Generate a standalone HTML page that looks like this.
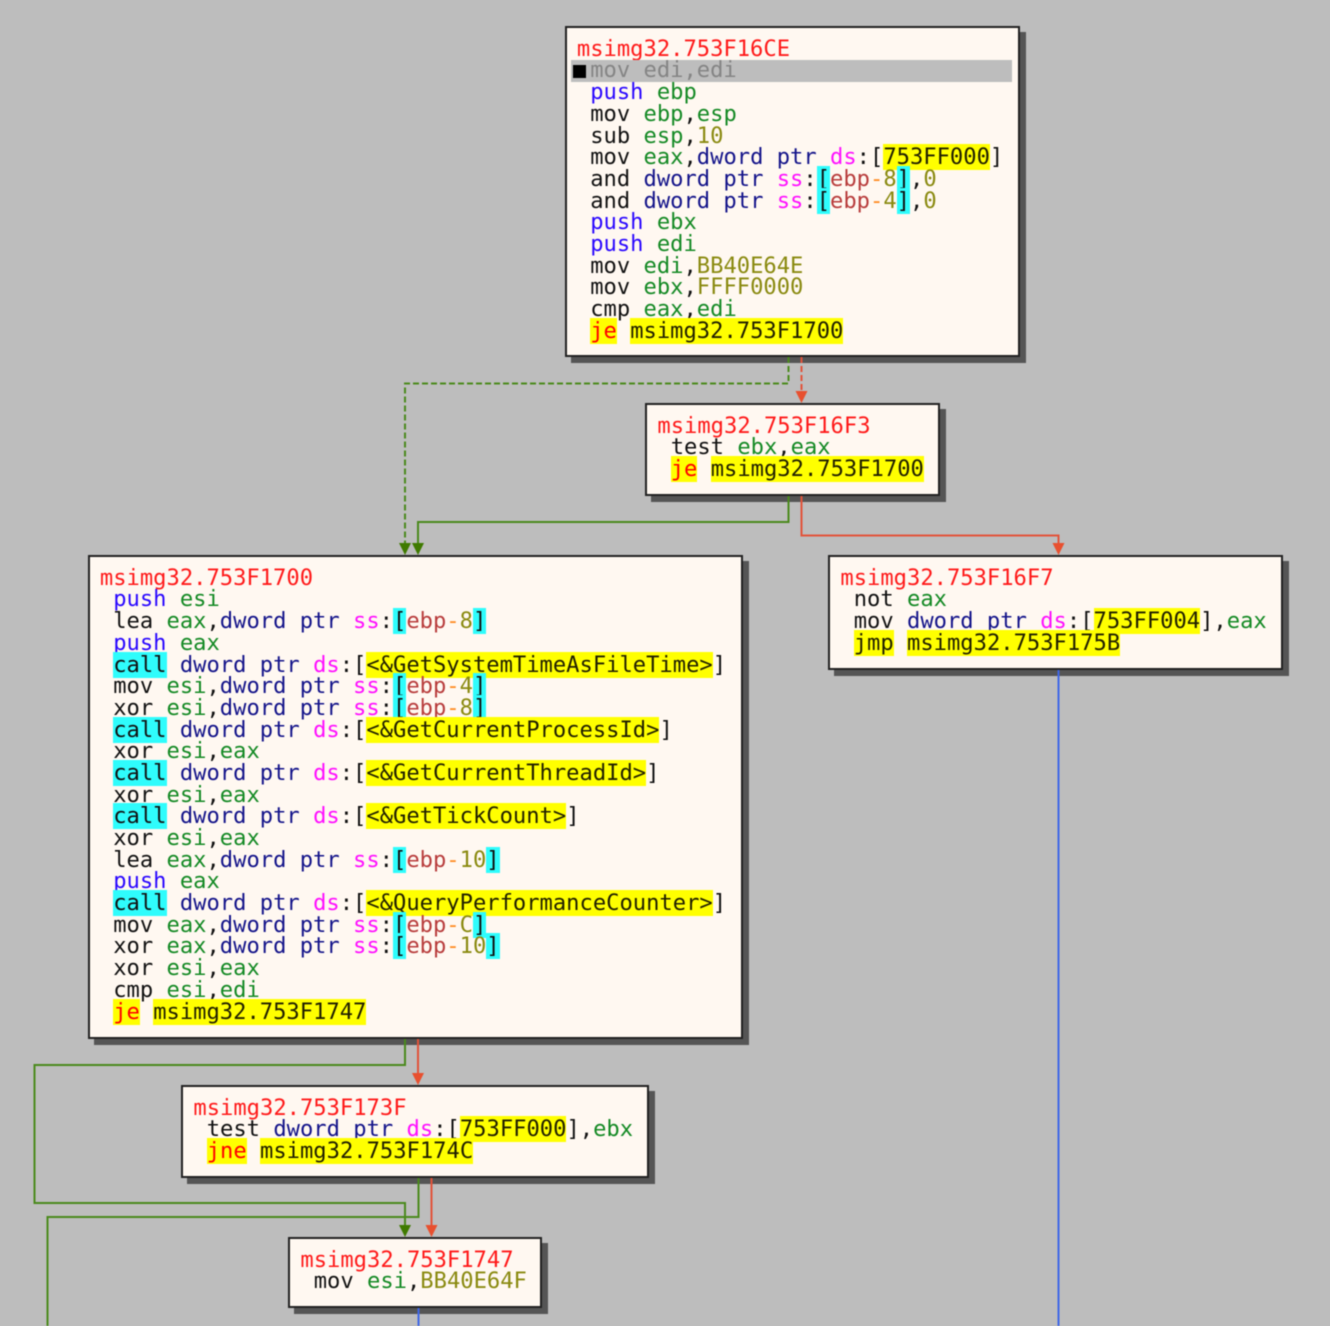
<!DOCTYPE html>
<html><head><meta charset="utf-8"><style>
html,body{margin:0;padding:0;background:#bdbdbd}
#w{position:relative;width:1330px;height:1326px;overflow:hidden;background:#bdbdbd;filter:blur(.45px)}
svg{position:absolute;left:0;top:0}
.d{position:absolute;box-sizing:border-box;background:#fff8f1;border:2px solid #222;box-shadow:6px 6px 0 #555;padding:10.8px 0 0 10.4px;font:22.13px/21.7px "DejaVu Sans Mono",monospace;color:#111;overflow:visible}
.d div{height:21.7px;white-space:pre}
i{font-style:normal}
.t{color:#ff1a1a}.g{color:#158a25}.k{color:#14148a}.m{color:#ff10ff}.n{color:#8a8a10}.b{color:#b83c3c}.p{color:#2a08ff}.h{color:#ff0000;background:#ff0}
.y{background:#ff0;color:#201f00}.c{background:#2ffcfc}.o{color:#ff8a20}
.d .s{background:#bdbdbd;color:#858585;margin:0 6px 0 -6px;padding-left:6px;position:relative}
.q{position:absolute;left:2px;top:5px;width:13px;height:13px;background:#000}
</style></head><body><div id="w">

<div class="d" style="left:564.5px;top:26px;width:455.5px;height:331px"><div class="t">msimg32.753F16CE</div>
<div class="s"><span class="q"></span> mov edi,edi</div>
<div> <i class="p">push</i> <i class="g">ebp</i></div>
<div> mov <i class="g">ebp</i>,<i class="g">esp</i></div>
<div> sub <i class="g">esp</i>,<i class="n">10</i></div>
<div> mov <i class="g">eax</i>,<i class="k">dword ptr</i> <i class="m">ds</i>:[<i class="y">753FF000</i>]</div>
<div> and <i class="k">dword ptr</i> <i class="m">ss</i>:<i class="c">[</i><i class="b">ebp</i><i class="o">-</i><i class="n">8</i><i class="c">]</i>,<i class="n">0</i></div>
<div> and <i class="k">dword ptr</i> <i class="m">ss</i>:<i class="c">[</i><i class="b">ebp</i><i class="o">-</i><i class="n">4</i><i class="c">]</i>,<i class="n">0</i></div>
<div> <i class="p">push</i> <i class="g">ebx</i></div>
<div> <i class="p">push</i> <i class="g">edi</i></div>
<div> mov <i class="g">edi</i>,<i class="n">BB40E64E</i></div>
<div> mov <i class="g">ebx</i>,<i class="n">FFFF0000</i></div>
<div> cmp <i class="g">eax</i>,<i class="g">edi</i></div>
<div> <i class="h">je</i> <i class="y">msimg32.753F1700</i></div></div>

<div class="d" style="left:645px;top:403px;width:295px;height:93px"><div class="t">msimg32.753F16F3</div>
<div> test <i class="g">ebx</i>,<i class="g">eax</i></div>
<div> <i class="h">je</i> <i class="y">msimg32.753F1700</i></div></div>

<div class="d" style="left:87.5px;top:555px;width:655.5px;height:484px"><div class="t">msimg32.753F1700</div>
<div> <i class="p">push</i> <i class="g">esi</i></div>
<div> lea <i class="g">eax</i>,<i class="k">dword ptr</i> <i class="m">ss</i>:<i class="c">[</i><i class="b">ebp</i><i class="o">-</i><i class="n">8</i><i class="c">]</i></div>
<div> <i class="p">push</i> <i class="g">eax</i></div>
<div> <i class="c">call</i> <i class="k">dword ptr</i> <i class="m">ds</i>:[<i class="y">&lt;&amp;GetSystemTimeAsFileTime&gt;</i>]</div>
<div> mov <i class="g">esi</i>,<i class="k">dword ptr</i> <i class="m">ss</i>:<i class="c">[</i><i class="b">ebp</i><i class="o">-</i><i class="n">4</i><i class="c">]</i></div>
<div> xor <i class="g">esi</i>,<i class="k">dword ptr</i> <i class="m">ss</i>:<i class="c">[</i><i class="b">ebp</i><i class="o">-</i><i class="n">8</i><i class="c">]</i></div>
<div> <i class="c">call</i> <i class="k">dword ptr</i> <i class="m">ds</i>:[<i class="y">&lt;&amp;GetCurrentProcessId&gt;</i>]</div>
<div> xor <i class="g">esi</i>,<i class="g">eax</i></div>
<div> <i class="c">call</i> <i class="k">dword ptr</i> <i class="m">ds</i>:[<i class="y">&lt;&amp;GetCurrentThreadId&gt;</i>]</div>
<div> xor <i class="g">esi</i>,<i class="g">eax</i></div>
<div> <i class="c">call</i> <i class="k">dword ptr</i> <i class="m">ds</i>:[<i class="y">&lt;&amp;GetTickCount&gt;</i>]</div>
<div> xor <i class="g">esi</i>,<i class="g">eax</i></div>
<div> lea <i class="g">eax</i>,<i class="k">dword ptr</i> <i class="m">ss</i>:<i class="c">[</i><i class="b">ebp</i><i class="o">-</i><i class="n">10</i><i class="c">]</i></div>
<div> <i class="p">push</i> <i class="g">eax</i></div>
<div> <i class="c">call</i> <i class="k">dword ptr</i> <i class="m">ds</i>:[<i class="y">&lt;&amp;QueryPerformanceCounter&gt;</i>]</div>
<div> mov <i class="g">eax</i>,<i class="k">dword ptr</i> <i class="m">ss</i>:<i class="c">[</i><i class="b">ebp</i><i class="o">-</i><i class="n">C</i><i class="c">]</i></div>
<div> xor <i class="g">eax</i>,<i class="k">dword ptr</i> <i class="m">ss</i>:<i class="c">[</i><i class="b">ebp</i><i class="o">-</i><i class="n">10</i><i class="c">]</i></div>
<div> xor <i class="g">esi</i>,<i class="g">eax</i></div>
<div> cmp <i class="g">esi</i>,<i class="g">edi</i></div>
<div> <i class="h">je</i> <i class="y">msimg32.753F1747</i></div></div>

<div class="d" style="left:828px;top:555px;width:455px;height:115px"><div class="t">msimg32.753F16F7</div>
<div> not <i class="g">eax</i></div>
<div> mov <i class="k">dword ptr</i> <i class="m">ds</i>:[<i class="y">753FF004</i>],<i class="g">eax</i></div>
<div> <i class="y">jmp</i> <i class="y">msimg32.753F175B</i></div></div>

<div class="d" style="left:181px;top:1085px;width:468px;height:93px"><div class="t">msimg32.753F173F</div>
<div> test <i class="k">dword ptr</i> <i class="m">ds</i>:[<i class="y">753FF000</i>],<i class="g">ebx</i></div>
<div> <i class="h">jne</i> <i class="y">msimg32.753F174C</i></div></div>

<div class="d" style="left:288px;top:1237px;width:254px;height:71px"><div class="t">msimg32.753F1747</div>
<div> mov <i class="g">esi</i>,<i class="n">BB40E64F</i></div></div>

<svg width="1330" height="1326" fill="none" stroke-width="2">
<path d="M788.5 357V383.5H405V546" stroke="#4a8a1c" stroke-dasharray="6 3"/>
<path d="M801.500 357V394" stroke="#e2533a" stroke-dasharray="6 3"/>
<path d="M788.500 496V522H418V546" stroke="#4a8a1c"/>
<path d="M801.500 496V535.500H1058.500V546" stroke="#e2533a"/>
<path d="M1058.500 670V1326" stroke="#3f67e8"/>
<path d="M405 1039V1065H34.500V1203H405V1228" stroke="#4a8a1c"/>
<path d="M418 1039V1076" stroke="#e2533a"/>
<path d="M418.500 1178V1217H47.500V1326" stroke="#4a8a1c"/>
<path d="M431.500 1178V1228" stroke="#e2533a"/>
<path d="M418.500 1308V1326" stroke="#3f67e8"/>
<g stroke="none" fill="#3f7a00"><path d="M399 543H411L405 555Z"/><path d="M412 543H424L418 555Z"/><path d="M399 1225H411L405 1237Z"/></g>
<g stroke="none" fill="#e8502f"><path d="M795.500 391H807.500L801.500 403Z"/><path d="M1052.500 543H1064.500L1058.500 555Z"/><path d="M412 1073H424L418 1085Z"/><path d="M425.500 1225H437.500L431.500 1237Z"/></g>
</svg>
</div></body></html>
